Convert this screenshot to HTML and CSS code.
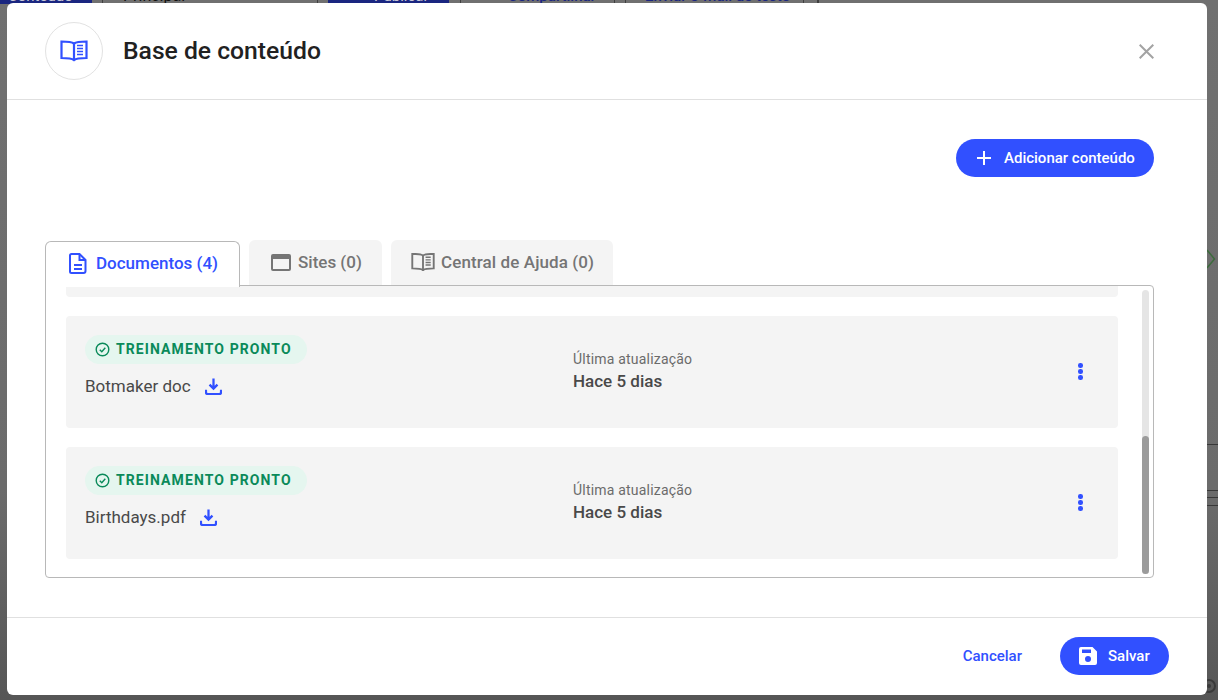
FILE: index.html
```html
<!DOCTYPE html>
<html lang="pt">
<head>
<meta charset="utf-8">
<title>Base de conteúdo</title>
<link rel="stylesheet" href="styles.css">
</head>
<body>
<div class="backdrop">
  <div class="bg-top">
    <span class="bg-btn bg-btn-a">Conteúdo</span>
    <i class="bg-sep bg-sep-a"></i>
    <span class="bg-main">Principal</span>
    <i class="bg-sep bg-sep-b"></i>
    <span class="bg-btn bg-btn-b">Publicar</span>
    <i class="bg-sep bg-sep-c"></i>
    <span class="bg-link bg-link-a">Compartilhar</span>
    <i class="bg-sep bg-sep-d"></i>
    <i class="bg-sep bg-sep-e"></i>
    <span class="bg-link bg-link-b">Enviar e-mail de teste</span>
    <i class="bg-sep bg-sep-f"></i>
    <i class="bg-sep bg-sep-f"></i>
    <i class="bg-sep"></i>
  </div>
  <svg class="bg-chev" width="9" height="20" viewBox="0 0 9 20"><path d="M0 1l7.500 9-7.500 9" fill="none" stroke="#3d6b3d" stroke-width="1.500"/></svg>
  <span class="bg-line bg-line-1"></span>
  <span class="bg-line bg-line-2"></span>
  <span class="bg-line bg-line-3"></span>
  <span class="bg-line bg-line-4"></span>
  <svg class="bg-gear" width="18" height="18" viewBox="0 0 18 18"><circle cx="9" cy="9" r="6" fill="none" stroke="#3a3a3a" stroke-width="2"/><circle cx="9" cy="9" r="2" fill="#3a3a3a"/></svg>
</div>
<div class="overlay">
  <section class="modal">
    <header class="modal-head">
      <div class="head-icon">
        <svg width="28" height="28" viewBox="0 0 28 28" fill="none" stroke="#3150ff" stroke-width="2.200"><path d="M14 6.500C12 5 9 4.500 1.500 4.500V21C9 21 12 21.500 14 23C16 21.500 19 21 26.500 21V4.500C19 4.500 16 5 14 6.500Z"/><path d="M14 6.500V23"/><path stroke-width="1.700" d="M17 8.500h6M17 11.500h6M17 14.500h6M17 17.500h6"/></svg>
      </div>
      <h1 class="modal-title">Base de conteúdo</h1>
      <svg class="close" width="15" height="15" viewBox="0 0 15 15" fill="none" stroke="#a3a3a3" stroke-width="2"><path d="M.7.700l13.600 13.600M14.300.700L.7 14.300"/></svg>
    </header>
    <main class="modal-body">
      <div class="actions">
        <button class="add-btn">
          <svg width="14" height="14" viewBox="0 0 14 14" stroke="#fff" stroke-width="2"><path d="M7 0v14M0 7h14"/></svg>
          <span>Adicionar conteúdo</span>
        </button>
      </div>
      <div class="tabs">
        <div class="tab tab-active">
          <svg width="18" height="21" viewBox="0 0 18 21" fill="none" stroke="#3150ff" stroke-width="2"><path d="M2.500 1h8l6 6v11a2 2 0 0 1-2 2h-12a1.500 1.500 0 0 1-1.500-1.500V2.500A1.500 1.500 0 0 1 2.500 1z"/><path d="M10.500 1v6h6M5 12h8M5 16h8"/></svg>
          <span>Documentos (4)</span>
        </div>
        <div class="tab tab-sites">
          <svg width="20" height="17" viewBox="0 0 20 17" fill="none" stroke="#757575" stroke-width="2"><rect x="1" y="1" width="18" height="15" rx="1"/><path stroke-width="3" d="M1 3.500h18"/></svg>
          <span>Sites (0)</span>
        </div>
        <div class="tab tab-help">
          <svg width="24" height="18" viewBox="0 0 28 21" fill="none" stroke="#757575" stroke-width="2.200"><path d="M14 3C12 1.500 9 1 1.500 1V18C9 18 12 18.500 14 20C16 18.500 19 18 26.500 18V1C19 1 16 1.500 14 3Z"/><path d="M14 3V20"/><path stroke-width="1.700" d="M17 5h6M17 8h6M17 11h6M17 14h6"/></svg>
          <span>Central de Ajuda (0)</span>
        </div>
      </div>
      <div class="panel">
        <div class="list">
          <div class="item item-cut"></div>
          <article class="item">
            <div class="item-main">
              <div class="badge">
                <svg width="15" height="15" viewBox="0 0 15 15" fill="none" stroke="#0a8a5a" stroke-width="1.400"><circle cx="7.500" cy="7.500" r="6.300"/><path d="M4.800 7.700l2 2 3.500-4"/></svg>
                <span>TREINAMENTO PRONTO</span>
              </div>
              <div class="file">
                <span>Botmaker doc</span>
                <svg width="17" height="17" viewBox="0 0 18 18" fill="none" stroke="#3150ff" stroke-width="2.400"><path d="M9 0.500V11M4.800 7L9 11.200 13.200 7"/><path d="M1 12.500V15a2 2 0 0 0 2 2h12a2 2 0 0 0 2-2v-2.500"/></svg>
              </div>
            </div>
            <div class="item-meta">
              <span class="meta-label">Última atualização</span>
              <span class="meta-value">Hace 5 dias</span>
            </div>
            <span class="dots"><i></i><i></i><i></i></span>
          </article>
          <article class="item">
            <div class="item-main">
              <div class="badge">
                <svg width="15" height="15" viewBox="0 0 15 15" fill="none" stroke="#0a8a5a" stroke-width="1.400"><circle cx="7.500" cy="7.500" r="6.300"/><path d="M4.800 7.700l2 2 3.500-4"/></svg>
                <span>TREINAMENTO PRONTO</span>
              </div>
              <div class="file">
                <span>Birthdays.pdf</span>
                <svg width="17" height="17" viewBox="0 0 18 18" fill="none" stroke="#3150ff" stroke-width="2.400"><path d="M9 0.500V11M4.800 7L9 11.200 13.200 7"/><path d="M1 12.500V15a2 2 0 0 0 2 2h12a2 2 0 0 0 2-2v-2.500"/></svg>
              </div>
            </div>
            <div class="item-meta">
              <span class="meta-label">Última atualização</span>
              <span class="meta-value">Hace 5 dias</span>
            </div>
            <span class="dots"><i></i><i></i><i></i></span>
          </article>
        </div>
        <div class="scroll"><div class="thumb"></div></div>
      </div>
    </main>
    <footer class="modal-foot">
      <a class="cancel">Cancelar</a>
      <button class="save-btn">
        <svg width="18" height="18" viewBox="0 0 18 18"><path fill="#fff" fill-rule="evenodd" d="M2 0h11.500L18 4.500V16a2 2 0 0 1-2 2H2a2 2 0 0 1-2-2V2a2 2 0 0 1 2-2zM3 2.500V6h9V2.500zM9 9a3 3 0 1 0 0 6 3 3 0 0 0 0-6z"/></svg>
        <span>Salvar</span>
      </button>
    </footer>
  </section>
</div>
</body>
</html>
```
FILE: styles.css
```css
* { box-sizing: border-box; }
html, body { margin: 0; padding: 0; height: 700px; overflow: hidden; }
body { font-family: Roboto, "Liberation Sans", sans-serif; background: #6e6e6e; }

.backdrop { position: absolute; inset: 0; background: linear-gradient(#707070, #6b6b6b 70%, #565656); overflow: hidden; }
.bg-top { display: flex; align-items: flex-start; height: 4px; overflow: hidden; font-size: 15px; line-height: 16px; }
.bg-top > span { flex: none; height: 16px; margin-top: -12px; }
.bg-sep { flex: none; width: 1px; height: 4px; background: #3f3f3f; }
.bg-btn { background: #1a2680; color: #c8c8d8; padding: 0 10px; }
.bg-btn-a { width: 92px; padding-left: 8px; white-space: nowrap; }
.bg-sep-a { margin: 0 20px 0 10px; }
.bg-main { color: #111; width: 194px; font-size: 16px; }
.bg-sep-b { margin-right: 10px; }
.bg-btn-b { width: 121px; padding-left: 46px; }
.bg-sep-c { margin: 0 47px 0 11px; }
.bg-link { color: #1a2680; font-weight: 500; white-space: nowrap; }
.bg-link-a { width: 88px; }
.bg-sep-d { margin: 0 10px 0 18px; }
.bg-sep-e { margin-right: 19px; }
.bg-link-b { width: 145px; }
.bg-sep-f { margin-left: 13px; }
.bg-chev { position: absolute; left: 1207px; top: 249px; }
.bg-line { position: absolute; left: 1207px; width: 11px; height: 1px; background: #383838; }
.bg-line-1 { top: 444px; }
.bg-line-2 { top: 490px; }
.bg-line-3 { top: 497px; }
.bg-line-4 { top: 505px; }
.bg-gear { position: absolute; left: 1200px; top: 677px; }

.overlay { position: absolute; inset: 0; padding: 3px 11px 5px 7px; }
.modal { height: 692px; background: #fff; border-radius: 6px; display: flex; flex-direction: column; }

.modal-head { height: 97px; flex: none; display: flex; align-items: center; padding: 0 53px 0 38px; border-bottom: 1px solid #e0e0e0; }
.head-icon { width: 58px; height: 58px; border: 1px solid #e2e2e2; border-radius: 50%; display: flex; align-items: center; justify-content: center; flex: none; }
.modal-title { margin: 0 0 0 20px; font-size: 24.700px; line-height: 32px; font-weight: 500; color: #212121; flex: 1; }
.close { flex: none; }

.modal-body { flex: 1; padding: 39px 53px 0 38px; min-height: 0; }
.actions { display: flex; justify-content: flex-end; height: 38px; }
.add-btn, .save-btn { border: 0; height: 38px; border-radius: 19px; background: #3150ff; color: #fff; font-family: inherit; font-size: 15px; font-weight: 500; display: flex; align-items: center; padding: 0; }
.add-btn { width: 198px; padding: 0 0 1px 21px; gap: 13px; }
.save-btn { width: 109px; padding-left: 19px; gap: 11px; }

.tabs { display: flex; align-items: flex-end; gap: 9px; margin-top: 63px; height: 47px; position: relative; z-index: 1; }
.tab { height: 45px; background: #f4f4f4; border-radius: 6px 6px 0 0; display: flex; align-items: center; font-size: 17px; font-weight: 500; color: #757575; margin-bottom: 2px; padding-bottom: 1px; }
.tab-active { height: 46px; margin-bottom: 0; width: 195px; background: #fff; color: #3150ff; border: 1px solid #b8b8b8; border-bottom: 0; padding: 0 0 3px 23px; gap: 9px; }
.tab-active svg { flex: none; }
.tab-sites { width: 133px; padding-left: 22px; gap: 7px; }
.tab-help { width: 222px; padding-left: 20px; gap: 6px; letter-spacing: 0.100px; }

.panel { height: 293px; margin-top: -2px; border: 1px solid #b8b8b8; border-radius: 0 4px 4px 4px; display: flex; overflow: hidden; }
.list { width: 1052px; margin-left: 20px; display: flex; flex-direction: column; gap: 19px; flex: none; }
.item { height: 112px; flex: none; background: #f4f4f4; border-radius: 4px; display: flex; position: relative; padding: 19px 0 0 19px; }
.item-cut { height: 11px; padding: 0; border-radius: 0 0 4px 4px; }
.item-main { width: 488px; flex: none; }
.badge { width: 222px; height: 29px; border-radius: 15px; background: #e5f6ef; display: flex; align-items: center; gap: 6px; padding: 0 0 1px 10px; color: #0a8a5a; font-size: 14px; font-weight: 700; letter-spacing: 1.100px; }
.file { display: flex; align-items: center; gap: 14px; margin-top: 11px; font-size: 17px; line-height: 22px; color: #494949; }
.item-meta { display: flex; flex-direction: column; padding-top: 15px; }
.meta-label { font-size: 14px; line-height: 18px; color: #6b6b6b; letter-spacing: 0.200px; }
.meta-value { font-size: 17px; line-height: 26px; font-weight: 500; color: #494949; }
.dots { position: absolute; left: 1012px; top: 47px; width: 5px; display: flex; flex-direction: column; gap: 1.500px; }
.dots i { display: block; width: 4.500px; height: 4.500px; border-radius: 50%; background: #3150ff; }

.scroll { width: 7px; margin: 4px 0 3px 24px; border-radius: 4px; background: #e5e5e5; position: relative; flex: none; }
.thumb { position: absolute; left: 0; right: 0; bottom: 0; height: 138px; border-radius: 4px; background: #9b9b9b; }

.modal-foot { height: 78px; flex: none; border-top: 1px solid #e0e0e0; display: flex; align-items: center; justify-content: flex-end; gap: 38px; padding: 0 38px 1px 0; }
.cancel { font-size: 15px; font-weight: 500; color: #3150ff; }
```
